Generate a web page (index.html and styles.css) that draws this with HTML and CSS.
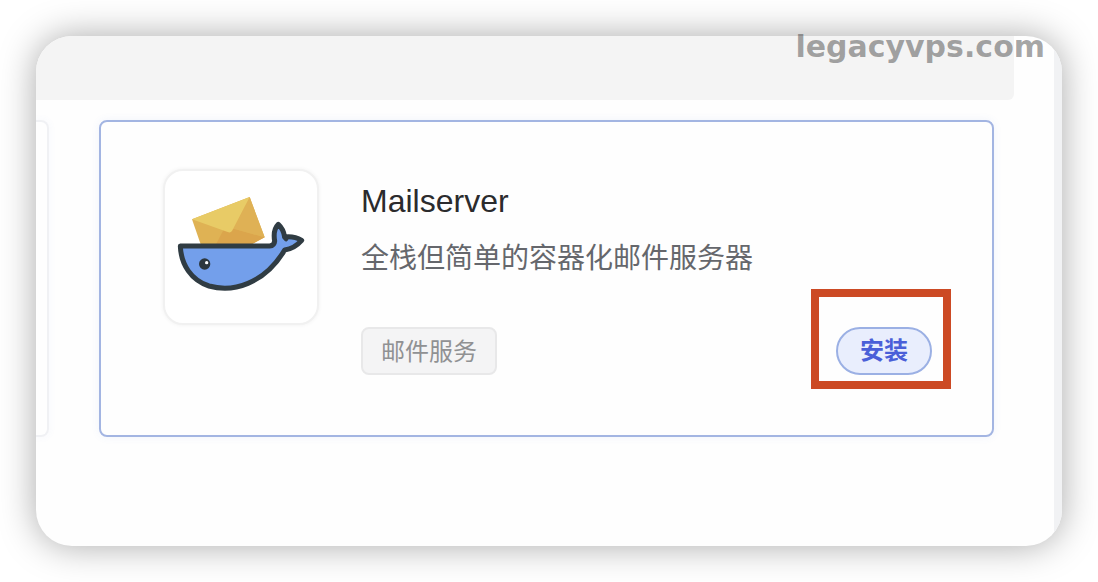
FILE: index.html
```html
<!DOCTYPE html>
<html lang="zh-CN">
	<head>
		<meta charset="utf-8">
		<title>Mailserver</title>
		<link rel="stylesheet" href="styles.css">
	</head>
	<body>
		<div class="panel">
			<div class="content">
				<div class="banner"></div>
				<div class="list">
					<div class="card-prev"></div>
					<div class="card">
						<div class="logo">
							<svg viewBox="30 32 456 456" aria-hidden="true">
								<!-- 信封 -->
								<path fill="#dfb254" d="M111 177L284 110L329 231L290 252H137Z"/>
								<path fill="#dba54c" d="M183 252L207 206H240L329 231L290 252Z"/>
								<path fill="#dfb155" d="M284 110L329 231L236 205Z"/>
								<path fill="#e8cb66" d="M111 177L284 110L231 212Q226 219 218 215Z"/>
								<!-- 鲸鱼 -->
								<path fill="#739feb" stroke="#303c43" stroke-width="15" stroke-linejoin="round" d="M76 257H344Q358 256 359 242C355 219 359 203 370 192C379 200 386 211 389 230C407 228 425 231 440 240C426 256 409 266 389 269C364 311 326 350 279 369C244 384 201 388 162 377C109 360 78 313 76 257Z"/>
								<path fill="none" stroke="#303c43" stroke-width="14" stroke-linecap="round" d="M389 230L393 236"/>
								<circle cx="149" cy="311" r="17" fill="#2d373d"/>
								<circle cx="155" cy="307" r="5" fill="#fff"/>
							</svg>
						</div>
						<div class="info">
							<h3 class="name">Mailserver</h3>
							<p class="desc">全栈但简单的容器化邮件服务器</p>
							<div class="foot">
								<span class="tag">邮件服务</span>
								<div class="action">
									<button type="button" class="install">安装</button>
								</div>
							</div>
						</div>
					</div>
				</div>
			</div>
			<div class="scroll"></div>
		</div>
		<div class="mark">legacyvps.com</div>
	</body>
</html>
```

FILE: styles.css
```css
*{margin: 0;padding: 0;box-sizing: border-box;}
body{
	position: relative;
	min-height: 100vh;
	padding: 36px;
	background: #fff;
	font-family: "Liberation Sans", "Noto Sans CJK SC", sans-serif;
}
.panel{
	display: flex;
	min-height: calc(100vh - 72px);
	border-radius: 36px;
	overflow: hidden;
	background: #fefefe;
	box-shadow: 0 0 36px rgba(0,0,0,0.34);
}
.content{flex: 1;min-width: 0;}
.scroll{width: 8px;background: #f1f2f4;}
.banner{height: 64px;margin-right: 40px;background: #f4f4f4;border-radius: 0 0 6px 0;}
.list{display: flex;gap: 50px;padding: 20px 60px 20px 0;}
.card-prev{width: 13px;border: 2px solid #f0f1f4;border-left: 0;border-radius: 0 8px 8px 0;box-shadow: 0 0 8px rgba(80,120,220,0.05);}
.card{
	flex: 1;
	display: flex;
	align-items: flex-start;
	gap: 42px;
	padding: 47px 60px 60px 62px;
	border: 2px solid #a3b5e2;
	border-radius: 8px;
	box-shadow: 0 0 8px rgba(80,120,220,0.08);
}
.logo{
	width: 156px;
	height: 156px;
	flex: none;
	border: 2px solid #f1f1f1;
	border-radius: 20px;
	background: #fff;
	box-shadow: 0 0 4px rgba(0,0,0,0.06);
}
.logo svg{display: block;width: 100%;height: 100%;}
.info{flex: 1;padding-top: 12px;}
.name{font-size: 32px;font-weight: normal;line-height: 40px;color: #2b2b2d;}
.desc{margin-top: 18px;font-size: 28px;line-height: 40px;color: #65676c;}
.foot{display: flex;justify-content: space-between;margin-top: 48px;}
.tag{height: 48px;padding: 0 18px;border: 2px solid #e8e8e9;border-radius: 8px;background: #f4f4f5;font-size: 24px;line-height: 46px;color: #909193;}
.action{position: relative;}
/* 红框标注 */
.action::after{
	content: "";
	position: absolute;
	inset: -38px -19px -14px -25px;
	border: 8px solid #cc4a24;
	pointer-events: none;
}
.install{
	display: block;
	height: 48px;
	padding: 0 22px;
	border: 2px solid #9bb0e4;
	border-radius: 24px;
	background: #e9eefd;
	font-family: inherit;
	font-size: 24px;
	font-weight: bold;
	line-height: 44px;
	color: #4a5fd8;
	cursor: pointer;
}
.mark{
	position: absolute;
	top: 29px;
	right: 53px;
	font-family: "DejaVu Sans", sans-serif;
	font-size: 30px;
	font-weight: bold;
	line-height: 36px;
	color: rgba(0,0,0,0.36);
}
```
